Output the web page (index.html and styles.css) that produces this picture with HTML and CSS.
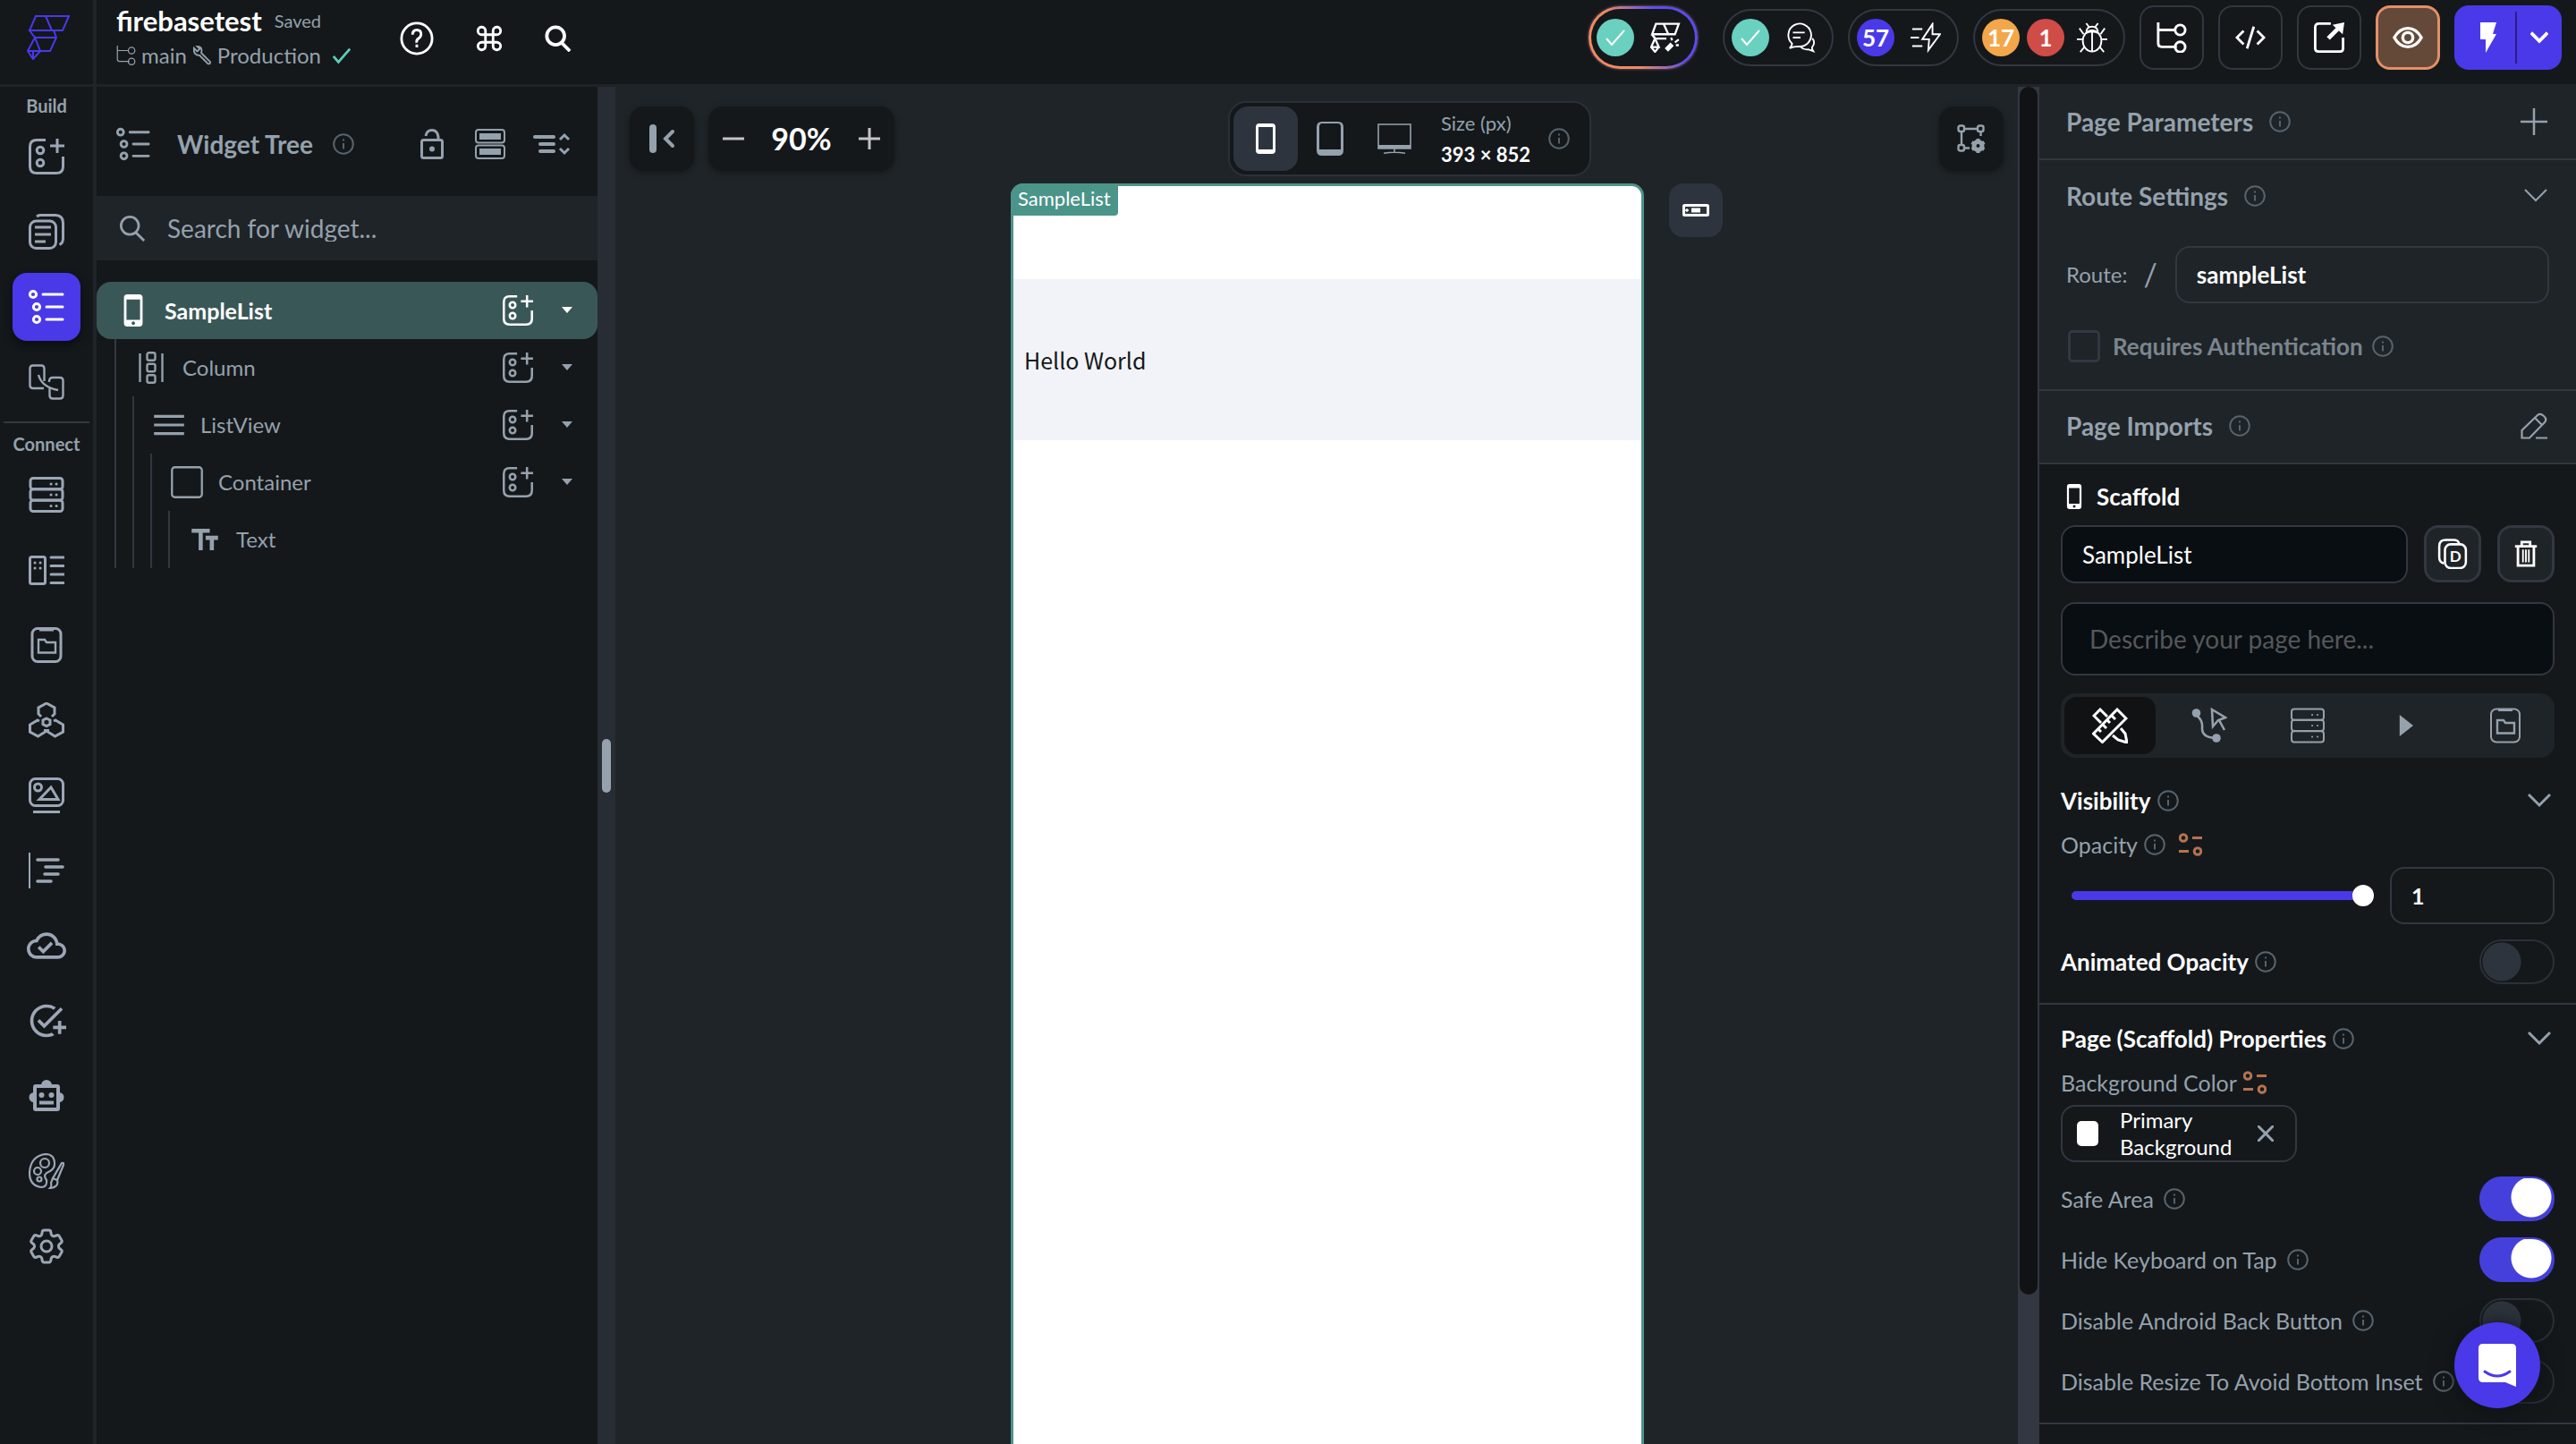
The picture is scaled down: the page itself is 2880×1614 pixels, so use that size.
FILE: index.html
```html
<!DOCTYPE html>
<html lang="en">
<head>
    <meta charset="UTF-8">
    <meta name="viewport" content="width=device-width, initial-scale=1.0">
    <title>firebasetest</title>
    <link rel="stylesheet" href="styles.css">
</head>
<body>

    <!-- Shared icons -->
    <svg class="sprite" aria-hidden="true">
        <symbol id="logo" viewBox="0 0 48 50"><path d="M10 1h37l-7 16H3zM21 1l7 16M3 17l6 8h24M30 17l3 8-7 15H1M9 25L1 40l6 9 8-9zM7 40v8"/></symbol>
        <symbol id="info" viewBox="0 0 24 24"><circle cx="12" cy="12" r="10.8"/><path d="M12 11v6.500M12 6.500v2"/></symbol>
        <symbol id="branch" viewBox="0 0 36 36"><path d="M2 0v25q0 4 4 4h18M2 9h20"/><circle cx="28" cy="9" r="6"/><circle cx="28" cy="29" r="6"/></symbol>
        <symbol id="wrench" viewBox="0 0 24 24"><path d="M11 9l11 11q0 3-3 2L9 12Q1 12 2 3l4 4 3-3-3-3q7 0 5 8z"/></symbol>
        <symbol id="check" viewBox="0 0 24 24"><path d="M2 13l6 7L22 4"/></symbol>
        <symbol id="help" viewBox="0 0 40 40"><circle cx="20" cy="20" r="18"/><path d="M15 15.500q0-5.500 5-5.500t5 5q0 3-3 5t-2 5M20 27v3.500"/></symbol>
        <symbol id="command" viewBox="0 0 24 24"><path d="M9 9V5.500A3 3 0 1 0 6 9h12A3 3 0 1 0 15 5.500v13a3 3 0 1 0 3-3.500H6a3 3 0 1 0 3 3.500z"/></symbol>
        <symbol id="search" viewBox="0 0 32 32"><circle cx="13" cy="13" r="10.500"/><path d="M20 21l10 10"/></symbol>
        <symbol id="add-widget" viewBox="0 0 40 40"><path d="M19 1.500H9Q1.500 1.500 1.500 9v22q0 7.500 7.500 7.500h22q7.500 0 7.500-7.500V20M32 0v16M24 8h16"/><circle cx="13" cy="13" r="3.800"/><circle cx="13" cy="27" r="3.800"/></symbol>
        <symbol id="pages" viewBox="0 0 40 40"><rect x="1.500" y="8" width="29" height="30.500" rx="7"/><path d="M9 3q3-2 6-1.500h15q8.500 0 8.500 9v17q0 5-4 7M7 15h18M7 23h18M7 31h12"/></symbol>
        <symbol id="tree" viewBox="0 0 40 40"><circle cx="5" cy="6" r="3.600"/><circle cx="9" cy="20" r="3.600"/><circle cx="9" cy="34" r="3.600"/><path stroke-linecap="round" d="M16 6h22M20 20h18M20 34h18"/></symbol>
        <symbol id="storyboard" viewBox="0 0 40 40"><path stroke-width="2.400" d="M17 27H5q-3.500 0-3.500-3.500V5Q1.500 1.500 5 1.500h9q3.500 0 3.500 3.500v14M23 20v-1q0-4 4-4h8q3.500 0 3.500 3.500V35q0 3.500-3.500 3.500h-8q-3.500 0-3.500-3.500v-8M11 12q4 14 22 17"/></symbol>
        <symbol id="database" viewBox="0 0 40 40"><rect x="2" y="1.500" width="36" height="12.300" rx="3"/><rect x="2" y="13.800" width="36" height="12.300" rx="3"/><rect x="2" y="26.200" width="36" height="12.300" rx="3"/><path stroke-linecap="round" d="M25 8h.1M31 8h.1M25 20h.1M31 20h.1M25 32.500h.1M31 32.500h.1"/></symbol>
        <symbol id="types" viewBox="0 0 40 40"><rect x="1.500" y="5.500" width="17" height="30" rx="2"/><path stroke-linecap="round" d="M25 6h14M25 15.500h14M25 25h14M25 34.500h14M7 12h.1M13 12h.1M7 18h.1M13 18h.1"/></symbol>
        <symbol id="app-state" viewBox="0 0 40 40"><rect x="4" y="1.500" width="32" height="37" rx="6"/><path d="M12 3h16"/><path stroke-width="2.400" d="M11 14h7l2 3h10v11.500H11z"/></symbol>
        <symbol id="hexes" viewBox="0 0 40 40"><path d="M14 16l-3-3V6l9-5 9 5v7l-3 3M12 21l-2-1-8.500 5v8l9 5 8-5v-3M28 21l2-1 8.500 5v8l-9 5-8-5v-3"/><path d="M20 18l4 2v4.500l-4 2-4-2V20z"/></symbol>
        <symbol id="media" viewBox="0 0 40 40"><rect x="1.500" y="1.500" width="37" height="30" rx="6"/><circle cx="10.500" cy="11" r="4"/><path d="M12 24.500L25 11l8 13.500zM5 38.500h30"/></symbol>
        <symbol id="outline" viewBox="0 0 40 40"><path stroke-width="2" d="M1 0v40"/><path stroke-linecap="round" stroke-width="3.600" d="M10 8h23M19 16h19M18 24h15M10 32h15"/></symbol>
        <symbol id="cloud" viewBox="0 0 24 24"><path class="solid" d="M19.350 10.040C18.670 6.590 15.640 4 12 4 9.110 4 6.600 5.640 5.350 8.040 2.340 8.360 0 10.910 0 14c0 3.310 2.690 6 6 6h13c2.760 0 5-2.240 5-5 0-2.640-2.050-4.780-4.650-4.960zM19 18H6c-2.210 0-4-1.790-4-4s1.790-4 4-4h.71C7.370 7.690 9.480 6 12 6c3.040 0 5.500 2.460 5.500 5.500v.5H19c1.660 0 3 1.340 3 3s-1.340 3-3 3zm-9-3.820l-2.090-2.090L6.500 13.500 10 17l6.010-6.010-1.410-1.410z"/></symbol>
        <symbol id="add-task" viewBox="0 0 24 24"><path class="solid" d="M22 5.180L10.590 16.600l-4.240-4.240 1.410-1.410 2.830 2.830 10-10L22 5.180zM12 20c-4.410 0-8-3.590-8-8s3.590-8 8-8c1.570 0 3.040.46 4.280 1.250l1.450-1.450C16.100 2.670 14.130 2 12 2 6.480 2 2 6.480 2 12s4.480 10 10 10c1.730 0 3.360-.44 4.780-1.220l-1.500-1.500c-1 .46-2.110.72-3.280.72zm7-5h-3v2h3v3h2v-3h3v-2h-3v-3h-2v3z"/></symbol>
        <symbol id="robot" viewBox="0 0 40 40"><rect x="7" y="9" width="26" height="26" rx="1" stroke-width="4"/><path class="solid" d="M14 8a6 6 0 0 1 12 0zM6 16a5.500 5.500 0 0 0 0 11zM34 16a5.500 5.500 0 0 1 0 11z"/><circle class="solid" cx="14.500" cy="19" r="3"/><circle class="solid" cx="25.500" cy="19" r="3"/><path d="M12 27.500h16" stroke-width="4"/></symbol>
        <symbol id="palette" viewBox="0 0 40 40"><g stroke-width="2.200"><path d="M20 30q1 8-6 8Q1 36 1 22 2 3 19 1q10 0 10 11 0 5-5 8-5 2-6 5 0 2 2 5z"/><circle cx="18" cy="11" r="5"/><circle cx="10" cy="20" r="4"/><circle cx="12" cy="29" r="2.500"/><path d="M37 11q3-1 2 2l-7 17-5-2zM27 28l5 2q2 8-8 9 2-2 1-6z"/></g></symbol>
        <symbol id="gear" viewBox="2 2 20 20"><path stroke-width="1.500" d="M9.594 3.940c.09-.542.56-.94 1.110-.94h2.593c.55 0 1.020.398 1.110.94l.213 1.281c.063.374.313.686.645.87.074.04.147.083.22.127.325.196.72.257 1.075.124l1.217-.456a1.125 1.125 0 0 1 1.370.49l1.296 2.247a1.125 1.125 0 0 1-.26 1.431l-1.003.827c-.293.241-.438.613-.43.992a7.723 7.723 0 0 1 0 .255c-.008.378.137.75.43.991l1.004.827c.424.35.534.955.26 1.430l-1.298 2.247a1.125 1.125 0 0 1-1.369.491l-1.217-.456c-.355-.133-.75-.072-1.076.124a6.470 6.470 0 0 1-.22.128c-.331.183-.581.495-.644.869l-.213 1.281c-.09.543-.56.94-1.110.94h-2.594c-.55 0-1.019-.398-1.110-.94l-.213-1.281c-.062-.374-.312-.686-.644-.87a6.520 6.520 0 0 1-.22-.127c-.325-.196-.72-.257-1.076-.124l-1.217.456a1.125 1.125 0 0 1-1.369-.49l-1.297-2.247a1.125 1.125 0 0 1 .26-1.431l1.004-.827c.292-.24.437-.613.43-.991a6.932 6.932 0 0 1 0-.255c.007-.38-.138-.751-.43-.992l-1.004-.827a1.125 1.125 0 0 1-.26-1.430l1.297-2.247a1.125 1.125 0 0 1 1.370-.491l1.216.456c.356.133.751.072 1.076-.124.072-.044.146-.086.22-.128.332-.183.582-.495.644-.869l.214-1.280Z"/><circle cx="12" cy="12" r="3" stroke-width="1.500"/></symbol>
        <symbol id="lock" viewBox="0 0 26 34"><rect x="1.500" y="12.500" width="23" height="20" rx="2"/><path d="M6 8q1-6.500 7-6.500T20 9v4"/><circle class="solid" cx="13" cy="22.500" r="3"/></symbol>
        <symbol id="rows" viewBox="0 0 34 34"><g stroke-width="2"><rect x="1" y="1" width="32" height="14.500" rx="3"/><rect x="1" y="18.500" width="32" height="14.500" rx="3"/></g><path class="solid" d="M5 5h24v7H5zM5 22h24v7H5z"/></symbol>
        <symbol id="collapse" viewBox="0 0 42 26"><path stroke-linecap="round" stroke-width="4" d="M2 5h21M8 13h15M8 21h15"/><path d="M30 8l5-5 5 5M30 18l5 5 5-5"/></symbol>
        <symbol id="phone" viewBox="0 0 22 38"><path class="solid" fill-rule="evenodd" d="M4 0h14q4 0 4 4v30q0 4-4 4H4q-4 0-4-4V4q0-4 4-4zM3 6v24h16V6zM11 32a2 2 0 1 0 .1 0z"/></symbol>
        <symbol id="column" viewBox="0 0 28 36"><g stroke-width="2.400"><path d="M1.500 2v32M26.500 2v32"/><rect x="9.500" y="1.200" width="9" height="8.500" rx="2"/><rect x="9.500" y="13.800" width="9" height="8.500" rx="2"/><rect x="9.500" y="26.300" width="9" height="8.500" rx="2"/></g></symbol>
        <symbol id="list" viewBox="0 0 28 20"><path stroke-width="2.600" d="M0 2h28M0 10h28M0 18h28"/></symbol>
        <symbol id="container" viewBox="0 0 34 34"><rect x="1.200" y="1.200" width="31.600" height="31.600" rx="3" stroke-width="2.200"/></symbol>
        <symbol id="type" viewBox="0 0 32 26"><path stroke-width="5" d="M0 2.500h22M11 2v24M17 11h15M24.500 11v15"/></symbol>
        <symbol id="caret" viewBox="0 0 12 8"><path class="solid" d="M0 0h12L6 7z"/></symbol>
        <symbol id="flow-magic" viewBox="0 0 32 32"><g stroke-width="2.200"><path d="M6 1.500h24l-4 11H2zM14 1.500l5 11M2 13l3 4h12M5 17l-4 9h8zM1 26l4 5 4-5"/><path stroke-width="5" d="M17 29l6-6"/><path d="M23 19l-1-3M26 21l4-3M27 24h3"/></g></symbol>
        <symbol id="chat" viewBox="0 0 36 34"><path d="M8 24a13.500 13.500 0 1 1 8 3.500q-6 0-11 2 3-2 3-5.500zM9 11h14M9 17h9M18 28q4 4 9 3l6 2q-2-3-1-5 4-5 0-10"/></symbol>
        <symbol id="speed" viewBox="0 0 36 34"><path d="M2 7h12M0 17h10M2 27h12M26 1L14 19h8l-1 13 14-19h-9z"/></symbol>
        <symbol id="bug" viewBox="0 0 36 36"><ellipse cx="18" cy="22" rx="11" ry="12.500"/><path d="M11 11q1-6 7-6t7 6M18 11v24M11 1l3 4M25 1l-3 4M0 20h7M29 20h7M3 7l5 7M33 7l-5 7M4 35l5-6M32 35l-5-6M10 13q8-4 16 0"/></symbol>
        <symbol id="code" viewBox="0 0 36 28"><path d="M10 6l-8 8 8 8M26 6l8 8-8 8M22 1l-8 26"/></symbol>
        <symbol id="open" viewBox="0 0 36 36"><path d="M20 1.500H6Q1.500 1.500 1.500 6v25q0 3.500 4 3.500H31q3.500 0 3.500-3.500V18"/><path stroke-width="5" d="M17 19L30 6"/><path class="solid" d="M22 3l14-3-2 14z"/></symbol>
        <symbol id="eye" viewBox="0 0 36 26"><path stroke-width="3.600" d="M2 13Q8 2 18 2t16 11q-6 11-16 11T2 13z"/><circle cx="18" cy="13" r="6" stroke-width="3.600"/></symbol>
        <symbol id="bolt" viewBox="0 0 18 34"><path class="solid" d="M0 0h18l-4 13h4L6 34V19H0z"/></symbol>
        <symbol id="chevron" viewBox="0 0 26 16"><path d="M1 1l12 12L25 1"/></symbol>
        <symbol id="dock" viewBox="0 0 28 32"><path stroke-linecap="round" stroke-width="8" d="M4 4v24"/><path stroke-linecap="round" stroke-width="4" d="M26 8l-8 8 8 8"/></symbol>
        <symbol id="plus" viewBox="0 0 24 24"><path d="M12 0v24M0 12h24"/></symbol>
        <symbol id="minus" viewBox="0 0 24 24"><path d="M0 12h24"/></symbol>
        <symbol id="mobile" viewBox="0 0 22 34"><path class="solid" fill-rule="evenodd" d="M4 0h14q4 0 4 4v26q0 4-4 4H4q-4 0-4-4V4q0-4 4-4zM3 4v25h16V4z"/></symbol>
        <symbol id="tablet" viewBox="0 0 30 38"><path class="solid" fill-rule="evenodd" d="M6 0h18q6 0 6 6v26q0 6-6 6H6q-6 0-6-6V6q0-6 6-6zM6 2Q3 2 3 6v25h24V6q0-4-3-4z"/></symbol>
        <symbol id="desktop" viewBox="0 0 38 34"><path stroke-width="1.600" d="M1 1h36v27H1zM7 33.200q12-2 24 0M19 28v4"/><path class="solid" d="M1 24h36v4H1z"/></symbol>
        <symbol id="frame" viewBox="0 0 32 32"><g stroke-width="2.400"><rect x="1.500" y="1.500" width="6.500" height="6.500" rx="2"/><rect x="23" y="1.500" width="6.500" height="6.500" rx="2"/><rect x="1.500" y="23" width="6.500" height="6.500" rx="2"/><path d="M8 5h15M5 8v15M26.500 8v5M8 26.500h6"/></g><circle cx="23.500" cy="24" r="4.500" stroke-width="5"/><path stroke-width="4" d="M23.500 16v16M16.500 20l14 8M30.500 20l-14 8" stroke-dasharray="4 8"/></symbol>
        <symbol id="keyboard" viewBox="0 0 30 14"><rect x="1.500" y="1.500" width="27" height="11" rx="1"/><path class="solid" d="M10 4.500h10v5H10z"/><path stroke-width="1.400" d="M3 7h4M5 5v4"/></symbol>
        <symbol id="edit" viewBox="0 0 30 30"><path stroke-width="2.200" d="M1.500 28.500V20L19 3q3-2.500 7 1t1 7L10 28.500zM16 6l8 8M17 28.500h13"/></symbol>
        <symbol id="duplicate" viewBox="0 0 30 32"><g stroke-width="2.400"><rect x="7" y="6" width="22" height="25" rx="6"/><path d="M6 26Q1 25 1 20V8Q1 1.500 8 1.500h8q5 0 6 4"/></g><text class="letter" x="12" y="24">D</text></symbol>
        <symbol id="trash" viewBox="0 0 26 32"><path d="M0 7h26M8 6V2h10v4M3.500 8v22h19V8"/><path stroke-width="2" d="M9.500 11v15M13 11v15M16.500 11v15"/></symbol>
        <symbol id="design" viewBox="0 0 40 40"><path d="M1.500 29L28 2l10 10L11.500 38.500zM7 24l3 3M12 19l4 4M17 14l3 3M22 9l4 4M10 17L2 9l7-7 8 8M32 23l5 6 2 10-10-3-6-5"/></symbol>
        <symbol id="actions" viewBox="0 0 40 40"><circle class="solid" cx="5.500" cy="6" r="4.800"/><circle class="solid" cx="28" cy="34" r="4.800"/><path d="M6 9q7 5 6 14 0 10 14 11M23 2l15 9-8 3-6 7zM31 14l6 11" stroke-width="2.600"/></symbol>
        <symbol id="play" viewBox="0 0 20 30"><path class="solid" d="M1 0l19 15L1 30z"/></symbol>
        <symbol id="variable" viewBox="0 0 26 26"><circle cx="5" cy="5.500" r="3.800"/><circle cx="21" cy="20.500" r="3.800"/><path d="M15 5.500h11M0 20.500h11"/></symbol>
        <symbol id="close" viewBox="0 0 18 18"><path d="M0 0l18 18M18 0L0 18"/></symbol>
        <symbol id="intercom" viewBox="0 0 42 48"><path fill="#fff" stroke="none" d="M5 0h32q5 0 5 5v43l-12-5H5q-5 0-5-5V5q0-5 5-5z"/><path stroke="#4a39e8" stroke-linecap="round" d="M7 31q14 10 28 0"/></symbol>
    </svg>

    <header class="topbar">
        <a class="brand" href="#" aria-label="Home"><svg class="logo"><use href="#logo"/></svg></a>
        <div class="project">
            <div class="project-name"><h1>firebasetest</h1><span>Saved</span></div>
            <div class="project-meta">
                <svg><use href="#branch"/></svg><span>main</span>
                <svg><use href="#wrench"/></svg><span>Production</span>
                <svg class="ok"><use href="#check"/></svg>
            </div>
        </div>
        <nav class="quick">
            <button aria-label="Help"><svg class="s38"><use href="#help"/></svg></button>
            <button aria-label="Commands"><svg class="s34"><use href="#command"/></svg></button>
            <button aria-label="Search"><svg class="s30"><use href="#search"/></svg></button>
        </nav>
        <div class="status">
            <button class="pill pill-glow" aria-label="AI"><span class="dot teal"><svg><use href="#check"/></svg></span><svg class="s34"><use href="#flow-magic"/></svg></button>
            <button class="pill" aria-label="Comments"><span class="dot teal"><svg><use href="#check"/></svg></span><svg class="s34"><use href="#chat"/></svg></button>
            <button class="pill"><span class="dot purple">57</span><svg class="s34"><use href="#speed"/></svg></button>
            <button class="pill pill-issues"><span class="dot orange">17</span><span class="dot red">1</span><svg class="s34"><use href="#bug"/></svg></button>
            <button class="square" aria-label="Branches"><svg class="s34"><use href="#branch"/></svg></button>
            <button class="square" aria-label="Code"><svg class="s34"><use href="#code"/></svg></button>
            <button class="square" aria-label="Open"><svg class="s34"><use href="#open"/></svg></button>
            <button class="square preview" aria-label="Preview"><svg class="s34"><use href="#eye"/></svg></button>
            <div class="run">
                <button aria-label="Run"><svg class="s34"><use href="#bolt"/></svg></button>
                <button class="run-more" aria-label="Run options"><svg class="s20"><use href="#chevron"/></svg></button>
            </div>
        </div>
    </header>

    <div class="workspace">
        <nav class="rail">
            <span class="rail-label">Build</span>
            <button aria-label="Add widget"><svg><use href="#add-widget"/></svg></button>
            <button aria-label="Pages"><svg><use href="#pages"/></svg></button>
            <button class="active" aria-label="Widget tree"><svg><use href="#tree"/></svg></button>
            <button aria-label="Storyboard"><svg><use href="#storyboard"/></svg></button>
            <hr>
            <span class="rail-label">Connect</span>
            <button aria-label="Firestore"><svg><use href="#database"/></svg></button>
            <button aria-label="Data types"><svg><use href="#types"/></svg></button>
            <button aria-label="App state"><svg><use href="#app-state"/></svg></button>
            <button aria-label="API calls"><svg><use href="#hexes"/></svg></button>
            <button aria-label="Media"><svg><use href="#media"/></svg></button>
            <button aria-label="Custom code"><svg><use href="#outline"/></svg></button>
            <button aria-label="Cloud functions"><svg class="wide"><use href="#cloud"/></svg></button>
            <button aria-label="Tests"><svg class="wide"><use href="#add-task"/></svg></button>
            <button aria-label="Agents"><svg><use href="#robot"/></svg></button>
            <button aria-label="Theme"><svg><use href="#palette"/></svg></button>
            <button aria-label="Settings"><svg><use href="#gear"/></svg></button>
        </nav>

        <aside class="tree-panel">
            <div class="tree-header">
                <svg class="s38"><use href="#tree"/></svg>
                <h2>Widget Tree</h2>
                <svg class="info"><use href="#info"/></svg>
                <div class="tree-tools">
                    <button aria-label="Lock"><svg class="s34"><use href="#lock"/></svg></button>
                    <button aria-label="Rows"><svg class="s34"><use href="#rows"/></svg></button>
                    <button aria-label="Collapse"><svg class="s42"><use href="#collapse"/></svg></button>
                </div>
            </div>
            <div class="tree-search">
                <svg class="s30"><use href="#search"/></svg>
                <input type="text" placeholder="Search for widget..." aria-label="Search for widget">
            </div>
            <div class="tree">
                <div class="node root">
                    <svg><use href="#phone"/></svg><span>SampleList</span>
                    <button aria-label="Add"><svg><use href="#add-widget"/></svg></button>
                    <button class="caret" aria-label="Toggle"><svg><use href="#caret"/></svg></button>
                </div>
                <ul>
                    <li>
                        <div class="node">
                            <svg><use href="#column"/></svg><span>Column</span>
                            <button aria-label="Add"><svg><use href="#add-widget"/></svg></button>
                            <button class="caret" aria-label="Toggle"><svg><use href="#caret"/></svg></button>
                        </div>
                        <ul>
                            <li>
                                <div class="node">
                                    <svg class="short"><use href="#list"/></svg><span>ListView</span>
                                    <button aria-label="Add"><svg><use href="#add-widget"/></svg></button>
                                    <button class="caret" aria-label="Toggle"><svg><use href="#caret"/></svg></button>
                                </div>
                                <ul>
                                    <li>
                                        <div class="node">
                                            <svg><use href="#container"/></svg><span>Container</span>
                                            <button aria-label="Add"><svg><use href="#add-widget"/></svg></button>
                                            <button class="caret" aria-label="Toggle"><svg><use href="#caret"/></svg></button>
                                        </div>
                                        <ul>
                                            <li>
                                                <div class="node"><svg class="short"><use href="#type"/></svg><span>Text</span></div>
                                            </li>
                                        </ul>
                                    </li>
                                </ul>
                            </li>
                        </ul>
                    </li>
                </ul>
            </div>
        </aside>
        <div class="resizer"><span></span></div>

        <main class="canvas">
            <div class="canvas-bar">
                <button class="tool" aria-label="Dock panel"><svg class="s32"><use href="#dock"/></svg></button>
                <div class="zoom">
                    <button aria-label="Zoom out"><svg class="s24"><use href="#minus"/></svg></button>
                    <span>90%</span>
                    <button aria-label="Zoom in"><svg class="s24"><use href="#plus"/></svg></button>
                </div>
                <div class="devices">
                    <button class="active" aria-label="Mobile"><svg class="s34"><use href="#mobile"/></svg></button>
                    <button aria-label="Tablet"><svg class="s38"><use href="#tablet"/></svg></button>
                    <button aria-label="Desktop"><svg class="s38"><use href="#desktop"/></svg></button>
                    <div class="size"><span>Size (px)</span><b>393 × 852</b></div>
                    <svg class="info"><use href="#info"/></svg>
                </div>
                <button class="tool" aria-label="Canvas settings"><svg class="s32"><use href="#frame"/></svg></button>
            </div>
            <div class="stage">
                <div class="device">
                    <span class="device-label">SampleList</span>
                    <div class="device-list"><p>Hello World</p></div>
                </div>
                <button class="keyboard" aria-label="Show keyboard"><svg class="s30"><use href="#keyboard"/></svg></button>
            </div>
        </main>
        <div class="scrollbar"><span></span></div>

        <aside class="props">
            <section class="page-section head-row">
                <h2>Page Parameters</h2><svg class="info"><use href="#info"/></svg>
                <button class="end" aria-label="Add parameter"><svg class="s30"><use href="#plus"/></svg></button>
            </section>
            <section class="page-section">
                <div class="head-row">
                    <h2>Route Settings</h2><svg class="info"><use href="#info"/></svg>
                    <button class="end" aria-label="Collapse"><svg class="s26"><use href="#chevron"/></svg></button>
                </div>
                <div class="route">
                    <label for="route">Route:</label><span class="slash">/</span>
                    <input type="text" id="route" value="sampleList">
                </div>
                <div class="auth">
                    <input type="checkbox" id="auth"><label for="auth">Requires Authentication</label>
                    <svg class="info"><use href="#info"/></svg>
                </div>
            </section>
            <section class="page-section head-row">
                <h2>Page Imports</h2><svg class="info"><use href="#info"/></svg>
                <button class="end" aria-label="Edit imports"><svg class="s30"><use href="#edit"/></svg></button>
            </section>

            <section class="widget">
                <div class="widget-type"><svg><use href="#phone"/></svg><h3>Scaffold</h3></div>
                <div class="widget-name">
                    <input type="text" value="SampleList" aria-label="Widget name">
                    <button aria-label="Duplicate"><svg class="s34"><use href="#duplicate"/></svg></button>
                    <button aria-label="Delete"><svg class="s30"><use href="#trash"/></svg></button>
                </div>
                <textarea rows="1" placeholder="Describe your page here..." aria-label="Description"></textarea>
                <div class="tabs">
                    <button class="active" aria-label="Properties"><svg><use href="#design"/></svg></button>
                    <button aria-label="Actions"><svg><use href="#actions"/></svg></button>
                    <button aria-label="Backend query"><svg><use href="#database"/></svg></button>
                    <button aria-label="Animations"><svg class="s24"><use href="#play"/></svg></button>
                    <button aria-label="State"><svg><use href="#app-state"/></svg></button>
                </div>
                <div class="group-title">
                    <h3>Visibility</h3><svg class="info"><use href="#info"/></svg>
                    <button class="end" aria-label="Collapse"><svg class="s26"><use href="#chevron"/></svg></button>
                </div>
                <div class="field-title">
                    <label for="opacity">Opacity</label><svg class="info"><use href="#info"/></svg>
                    <svg class="variable"><use href="#variable"/></svg>
                </div>
                <div class="opacity">
                    <input type="range" id="opacity" min="0" max="1" step="0.1" value="1">
                    <input type="text" value="1" aria-label="Opacity value">
                </div>
                <div class="switch-row strong">
                    <label for="animated">Animated Opacity</label><svg class="info"><use href="#info"/></svg>
                    <input type="checkbox" class="switch" id="animated">
                </div>
            </section>

            <section class="widget scaffold">
                <div class="group-title">
                    <h3>Page (Scaffold) Properties</h3><svg class="info"><use href="#info"/></svg>
                    <button class="end" aria-label="Collapse"><svg class="s26"><use href="#chevron"/></svg></button>
                </div>
                <div class="field-title">
                    <span>Background Color</span><svg class="variable"><use href="#variable"/></svg>
                </div>
                <div class="color">
                    <i></i><span>Primary Background</span>
                    <button aria-label="Clear color"><svg class="s18"><use href="#close"/></svg></button>
                </div>
                <div class="switch-row">
                    <label for="safe">Safe Area</label><svg class="info"><use href="#info"/></svg>
                    <input type="checkbox" class="switch" id="safe" checked>
                </div>
                <div class="switch-row">
                    <label for="hide">Hide Keyboard on Tap</label><svg class="info"><use href="#info"/></svg>
                    <input type="checkbox" class="switch" id="hide" checked>
                </div>
                <div class="switch-row">
                    <label for="back">Disable Android Back Button</label><svg class="info"><use href="#info"/></svg>
                    <input type="checkbox" class="switch" id="back">
                </div>
                <div class="switch-row">
                    <label for="resize">Disable Resize To Avoid Bottom Inset</label><svg class="info"><use href="#info"/></svg>
                    <input type="checkbox" class="switch" id="resize">
                </div>
            </section>
        </aside>
    </div>

    <button class="messenger" aria-label="Open chat"><svg><use href="#intercom"/></svg></button>

</body>
</html>
```
FILE: styles.css
```css
* {
    box-sizing: border-box;
}

body {
    margin: 0;
    height: 100vh;
    display: flex;
    flex-direction: column;
    overflow: hidden;
    background-color: #14181b;
    color: #95a1ac;
    font-family: Lato, "Liberation Sans", sans-serif;
    font-size: 24px;
    line-height: 30px;
}

h1, h2, h3, p, ul {
    margin: 0;
    padding: 0;
}

ul {
    list-style: none;
}

button {
    display: flex;
    align-items: center;
    justify-content: center;
    flex-shrink: 0;
    margin: 0;
    padding: 0;
    border: none;
    background: none;
    color: inherit;
    font: inherit;
    cursor: pointer;
}

input, textarea {
    min-width: 0;
    margin: 0;
    color: #fff;
    font: inherit;
}

svg {
    flex-shrink: 0;
    fill: none;
    stroke: currentColor;
    stroke-width: 3;
}

.sprite {
    display: none;
}

.solid {
    fill: currentColor;
    stroke: none;
}

.letter {
    fill: currentColor;
    stroke: none;
    font-size: 16px;
    font-weight: bold;
}

/* Icon sizes */
.s18 { width: 18px; height: 18px; }
.s20 { width: 20px; height: 20px; stroke-width: 5; }
.s24 { width: 24px; height: 24px; }
.s26 { width: 26px; height: 26px; }
.s30 { width: 30px; height: 30px; }
.s32 { width: 32px; height: 32px; }
.s34 { width: 34px; height: 34px; }
.s38 { width: 38px; height: 38px; }
.s42 { width: 42px; height: 26px; }

.info {
    width: 24px;
    height: 24px;
    color: #57636c;
    stroke-width: 2;
}

.end {
    margin-left: auto;
}

/* Top bar */
.topbar {
    display: flex;
    flex-shrink: 0;
    height: 97px;
    border-bottom: 3px solid #1f2428;
}

.brand {
    width: 108px;
    padding: 17px 0 0 30px;
    border-right: 4px solid #1f2428;
    color: #4a39e8;
}

.logo {
    width: 48px;
    height: 50px;
    stroke-width: 2;
}

.project {
    padding: 5px 0 0 22px;
}

.project-name {
    display: flex;
    align-items: center;
    gap: 14px;
    height: 36px;
    font-size: 20px;
}

.project-name h1 {
    color: #fff;
    font-size: 31px;
}

.project-meta {
    display: flex;
    align-items: center;
    gap: 6px;
    height: 42px;
}

.project-meta svg {
    width: 22px;
    height: 22px;
    stroke-width: 2;
}

.project-meta .ok {
    margin-left: 6px;
    color: #5ecdbc;
    stroke-width: 3;
}

.quick {
    display: flex;
    align-items: center;
    gap: 45px;
    height: 86px;
    margin-left: 54px;
    color: #fff;
}

.quick svg {
    stroke-width: 3;
}

.quick .s34 {
    stroke-width: 2;
}

.quick .s30 {
    stroke-width: 4;
}

.status {
    display: flex;
    align-items: center;
    gap: 16px;
    height: 84px;
    margin-left: auto;
    padding-right: 16px;
    color: #fff;
}

.pill {
    gap: 18px;
    width: 124px;
    height: 64px;
    padding-right: 10px;
    border: 2px solid #323741;
    border-radius: 32px;
}

.pill svg {
    stroke-width: 2;
}

.pill-issues {
    gap: 8px;
    width: 170px;
}

.pill-issues svg {
    margin-left: 6px;
}

.pill-glow {
    width: 122px;
    height: 70px;
    margin-right: 12px;
    border: 3px solid transparent;
    border-radius: 35px;
    background: linear-gradient(#14181b, #14181b) padding-box, linear-gradient(60deg, #ee8b60 35%, #5b4cf0 70%) border-box;
    box-shadow: 0 0 3px #a06a90;
}

.dot {
    display: flex;
    align-items: center;
    justify-content: center;
    width: 42px;
    height: 42px;
    border-radius: 50%;
    font-size: 26px;
    font-weight: bold;
}

.dot svg {
    width: 24px;
    height: 24px;
}

.teal { background-color: #6ad0c0; }
.purple { background-color: #4a39e8; }
.orange { background-color: #f3a64a; }
.red { background-color: #d04c47; }

.square {
    width: 72px;
    height: 72px;
    border: 2px solid #323741;
    border-radius: 16px;
}

.preview {
    border: 3px solid #e29067;
    background-color: #644838;
}

.run {
    display: flex;
    width: 120px;
    height: 72px;
    border-radius: 16px;
    background-color: #4a39e8;
}

.run button {
    flex: 1;
    margin: 7px 0;
    padding-left: 8px;
}

.run .run-more {
    flex: none;
    width: 52px;
    padding: 0;
    border-left: 2px solid #2a2080;
}

/* Workspace */
.workspace {
    display: flex;
    flex: 1;
    min-height: 0;
}

.rail {
    display: flex;
    flex-direction: column;
    align-items: center;
    gap: 8px;
    width: 108px;
    flex-shrink: 0;
    padding-top: 6px;
    border-right: 4px solid #1f2428;
    color: #9ca6b5;
}

.rail-label {
    height: 26px;
    color: #95a1ac;
    font-size: 20px;
    font-weight: bold;
}

.rail button {
    width: 76px;
    height: 76px;
    border-radius: 16px;
}

.rail svg {
    width: 40px;
    height: 40px;
}

.rail .wide {
    width: 44px;
    height: 44px;
}

.rail .active {
    background-color: #4a39e8;
    color: #fff;
    box-shadow: 0 4px 8px #0b0d10;
}

.rail hr {
    width: 96px;
    height: 2px;
    margin: -2px 0 0;
    border: none;
    background-color: #323741;
}

/* Widget tree */
.tree-panel {
    width: 560px;
    flex-shrink: 0;
}

.tree-header {
    display: flex;
    align-items: center;
    height: 122px;
    padding: 6px 30px 0 22px;
}

.tree-header h2 {
    margin: 0 22px 0 30px;
}

h2 {
    font-size: 28px;
    line-height: 32px;
}

.tree-tools {
    display: flex;
    gap: 31px;
    margin-left: auto;
}

.tree-search {
    display: flex;
    align-items: center;
    gap: 24px;
    height: 72px;
    padding-left: 25px;
    background-color: #1f2428;
}

.tree-search input {
    flex: 1;
    padding: 0;
    border: none;
    outline: none;
    background: none;
    font-size: 28px;
}

.tree-search input::placeholder {
    color: #95a1ac;
}

.tree {
    padding-top: 24px;
}

.tree ul {
    margin-left: 18px;
    border-left: 2px solid #323741;
}

.tree > ul {
    margin-left: 20px;
}

.node {
    display: flex;
    align-items: center;
    gap: 24px;
    height: 64px;
    padding: 0 20px;
}

.node > svg {
    width: 38px;
    height: 36px;
    margin-right: -8px;
}

.node > .short {
    height: 24px;
}

.node span {
    flex: 1;
}

.node button svg {
    width: 34px;
    height: 34px;
}

.node .caret {
    width: 28px;
}

.node .caret svg {
    width: 12px;
    height: 8px;
}

.root {
    padding-left: 22px;
    border-radius: 16px;
    background-color: #3a5757;
    color: #fff;
    font-size: 25px;
    font-weight: bold;
}

.resizer {
    display: flex;
    align-items: center;
    justify-content: center;
    width: 20px;
    flex-shrink: 0;
    background-color: #282c34;
}

.resizer span {
    width: 10px;
    height: 60px;
    border-radius: 5px;
    background-color: #95a1ac;
}

/* Canvas */
.canvas {
    display: flex;
    flex-direction: column;
    flex: 1;
    min-width: 0;
    background-color: #1f2428;
}

.canvas-bar {
    display: flex;
    align-items: center;
    height: 108px;
    flex-shrink: 0;
    padding: 10px 16px 2px;
}

.tool {
    width: 72px;
    height: 72px;
    border-radius: 16px;
    background-color: #14181b;
    box-shadow: 0 2px 6px #14181b;
}

.zoom {
    display: flex;
    align-items: center;
    justify-content: space-between;
    width: 208px;
    height: 72px;
    margin: 0 auto 0 16px;
    padding: 0 16px;
    border-radius: 16px;
    background-color: #14181b;
    box-shadow: 0 2px 6px #14181b;
    color: #fff;
    font-size: 34px;
    font-weight: bold;
}

.zoom button {
    color: #c4c4c4;
}

.devices {
    display: flex;
    align-items: center;
    width: 406px;
    height: 84px;
    margin-right: auto;
    padding-left: 4px;
    border: 2px solid #2b3038;
    border-radius: 20px;
    background-color: #14181b;
}

/* the device box leaves room for the settings button */
.devices + .tool {
    margin-left: 16px;
}

.devices button {
    width: 72px;
    height: 72px;
    border-radius: 16px;
}

.devices .active {
    background-color: #2e343d;
    color: #fff;
}

.size {
    display: flex;
    flex-direction: column;
    gap: 5px;
    width: 120px;
    margin-left: 16px;
}

.size span {
    font-size: 22px;
}

.size b {
    color: #fff;
    font-size: 22px;
}

.stage {
    display: grid;
    grid-template-columns: 1fr 708px 1fr;
    gap: 28px;
    flex: 1;
    min-height: 0;
    padding-left: 24px;
}

.device {
    position: relative;
    grid-column: 2;
    padding-top: 104px;
    border: 3px solid #4b9489;
    border-bottom: none;
    border-radius: 14px 14px 0 0;
    background-color: #fff;
}

.device-label {
    position: absolute;
    top: -3px;
    left: -3px;
    padding: 2px 8px 4px;
    border-radius: 14px 4px 4px 4px;
    background-color: #4b9489;
    color: #fff;
    font-size: 22px;
}

.device-list {
    display: flex;
    align-items: center;
    height: 180px;
    padding-left: 12px;
    background-color: #f2f3f8;
    color: #14181b;
    font-family: "Noto Sans CJK SC", "Noto Sans", sans-serif;
    font-size: 25px;
}

.keyboard {
    width: 60px;
    height: 60px;
    border-radius: 16px;
    background-color: #2e343d;
    color: #fff;
}

.scrollbar {
    width: 24px;
    flex-shrink: 0;
    padding: 0 2px;
    background-color: #323741;
}

.scrollbar span {
    display: block;
    height: 89%;
    border-radius: 10px;
    background-color: #101214;
}

/* Properties */
.props {
    width: 600px;
    flex-shrink: 0;
}

.page-section {
    border-bottom: 2px solid #323741;
    background-color: #1f2428;
}

.head-row {
    display: flex;
    align-items: center;
    height: 82px;
    padding: 0 32px 2px 30px;
}

.head-row h2 {
    margin-right: 18px;
}

.head-row svg {
    stroke-width: 2;
}

.route {
    display: flex;
    align-items: center;
    height: 64px;
    margin-top: 14px;
    padding: 0 30px;
}

.slash {
    margin: 0 20px 0 18px;
    font-size: 34px;
}

input[type="text"], textarea {
    outline: none;
}

.route input {
    flex: 1;
    height: 64px;
    padding: 0 22px;
    border: 2px solid #323741;
    border-radius: 16px;
    background: none;
    font-size: 26px;
    font-weight: bold;
}

.auth {
    display: flex;
    align-items: center;
    height: 96px;
    padding-left: 32px;
    color: #7b858e;
    font-size: 26px;
    font-weight: bold;
}

.auth label {
    margin: 0 10px 0 14px;
}

.auth input {
    width: 36px;
    height: 36px;
    appearance: none;
    border: 3px solid #323741;
    border-radius: 5px;
}

.widget {
    padding: 16px 24px 12px;
    border-bottom: 2px solid #323741;
    font-size: 25px;
}

.widget-type {
    display: flex;
    align-items: center;
    gap: 18px;
    height: 40px;
    color: #fff;
}

.widget-type svg {
    width: 30px;
    height: 28px;
    margin: 0 -8px 0 0;
}

h3 {
    color: #fff;
    font-size: 26px;
}

.widget-name {
    display: flex;
    gap: 18px;
    margin-top: 12px;
}

.widget-name input {
    flex: 1;
    height: 65px;
    padding: 0 22px;
    border: 2px solid #323741;
    border-radius: 16px;
    background-color: #090e12;
    font-size: 26px;
}

.widget-name button {
    width: 64px;
    height: 64px;
    border: 3px solid #323741;
    border-radius: 16px;
    background-color: #1f2428;
    color: #fff;
}

.widget textarea {
    display: block;
    width: 100%;
    height: 82px;
    margin: 21px 0 20px;
    padding: 24px 30px;
    border: 2px solid #323741;
    border-radius: 16px;
    background-color: #090e12;
    font-size: 28px;
    resize: none;
}

.widget textarea::placeholder {
    color: #55585a;
}

.tabs {
    display: grid;
    grid-template-columns: repeat(5, 1fr);
    gap: 8px;
    height: 72px;
    padding: 4px;
    border-radius: 16px;
    background-color: #1f2428;
}

.tabs button {
    border-radius: 14px;
}

.tabs svg {
    width: 40px;
    height: 40px;
    stroke-width: 2;
}

.tabs .s24 {
    width: 24px;
    height: 24px;
}

.tabs .active {
    background-color: #101214;
    color: #fff;
}

.tabs .active svg {
    stroke-width: 3;
}

.group-title {
    display: flex;
    align-items: center;
    gap: 7px;
    height: 48px;
    margin-top: 24px;
    padding-right: 4px;
}

.field-title {
    display: flex;
    align-items: center;
    gap: 7px;
    height: 50px;
}

.variable {
    width: 26px;
    height: 26px;
    color: #b5734f;
}

.info + .variable {
    margin-left: 8px;
}

.opacity {
    display: flex;
    align-items: center;
    gap: 18px;
}

.opacity input[type="text"] {
    width: 184px;
    height: 64px;
    padding: 0 22px;
    border: 2px solid #323741;
    border-radius: 16px;
    background: none;
    font-weight: bold;
}

.opacity input[type="range"] {
    flex: 1;
    height: 24px;
    margin-left: 12px;
    appearance: none;
    background: none;
}

.opacity input::-webkit-slider-runnable-track {
    height: 10px;
    border-radius: 5px;
    background-color: #4a39e8;
}

.opacity input::-webkit-slider-thumb {
    appearance: none;
    width: 24px;
    height: 24px;
    margin-top: -7px;
    border-radius: 50%;
    background-color: #fff;
}

.switch-row {
    display: flex;
    align-items: center;
    gap: 11px;
    height: 68px;
}

.strong {
    gap: 7px;
    margin-top: 8px;
    color: #fff;
    font-size: 26px;
    font-weight: bold;
}

.switch {
    width: 84px;
    height: 50px;
    flex-shrink: 0;
    margin-left: auto;
    appearance: none;
    border: 2px solid #2b3038;
    border-radius: 25px;
    background: radial-gradient(circle at 23px 23px, #2e343d 21px, transparent 22px);
}

.switch:checked {
    border-color: #4540dc;
    background: radial-gradient(circle at 58px 23px, #fff 22px, #4540dc 23px) border-box;
}

.scaffold {
    padding-top: 0;
}

.scaffold .group-title {
    margin-top: 14px;
}

.color {
    display: flex;
    align-items: center;
    width: 264px;
    height: 64px;
    margin-bottom: 7px;
    padding: 0 24px 0 16px;
    border: 2px solid #323741;
    border-radius: 16px;
    color: #fff;
    font-size: 24px;
}

.color i {
    width: 24px;
    height: 28px;
    margin-right: 24px;
    border-radius: 5px;
    background-color: #fff;
}

.color span {
    flex: 1;
}

.color button {
    color: #95a1ac;
}

.messenger {
    position: fixed;
    right: 40px;
    bottom: 40px;
    width: 96px;
    height: 96px;
    border-radius: 50%;
    background-color: #4a39e8;
    box-shadow: 0 2px 24px #0f1215;
}

.messenger svg {
    width: 42px;
    height: 48px;
}
```
